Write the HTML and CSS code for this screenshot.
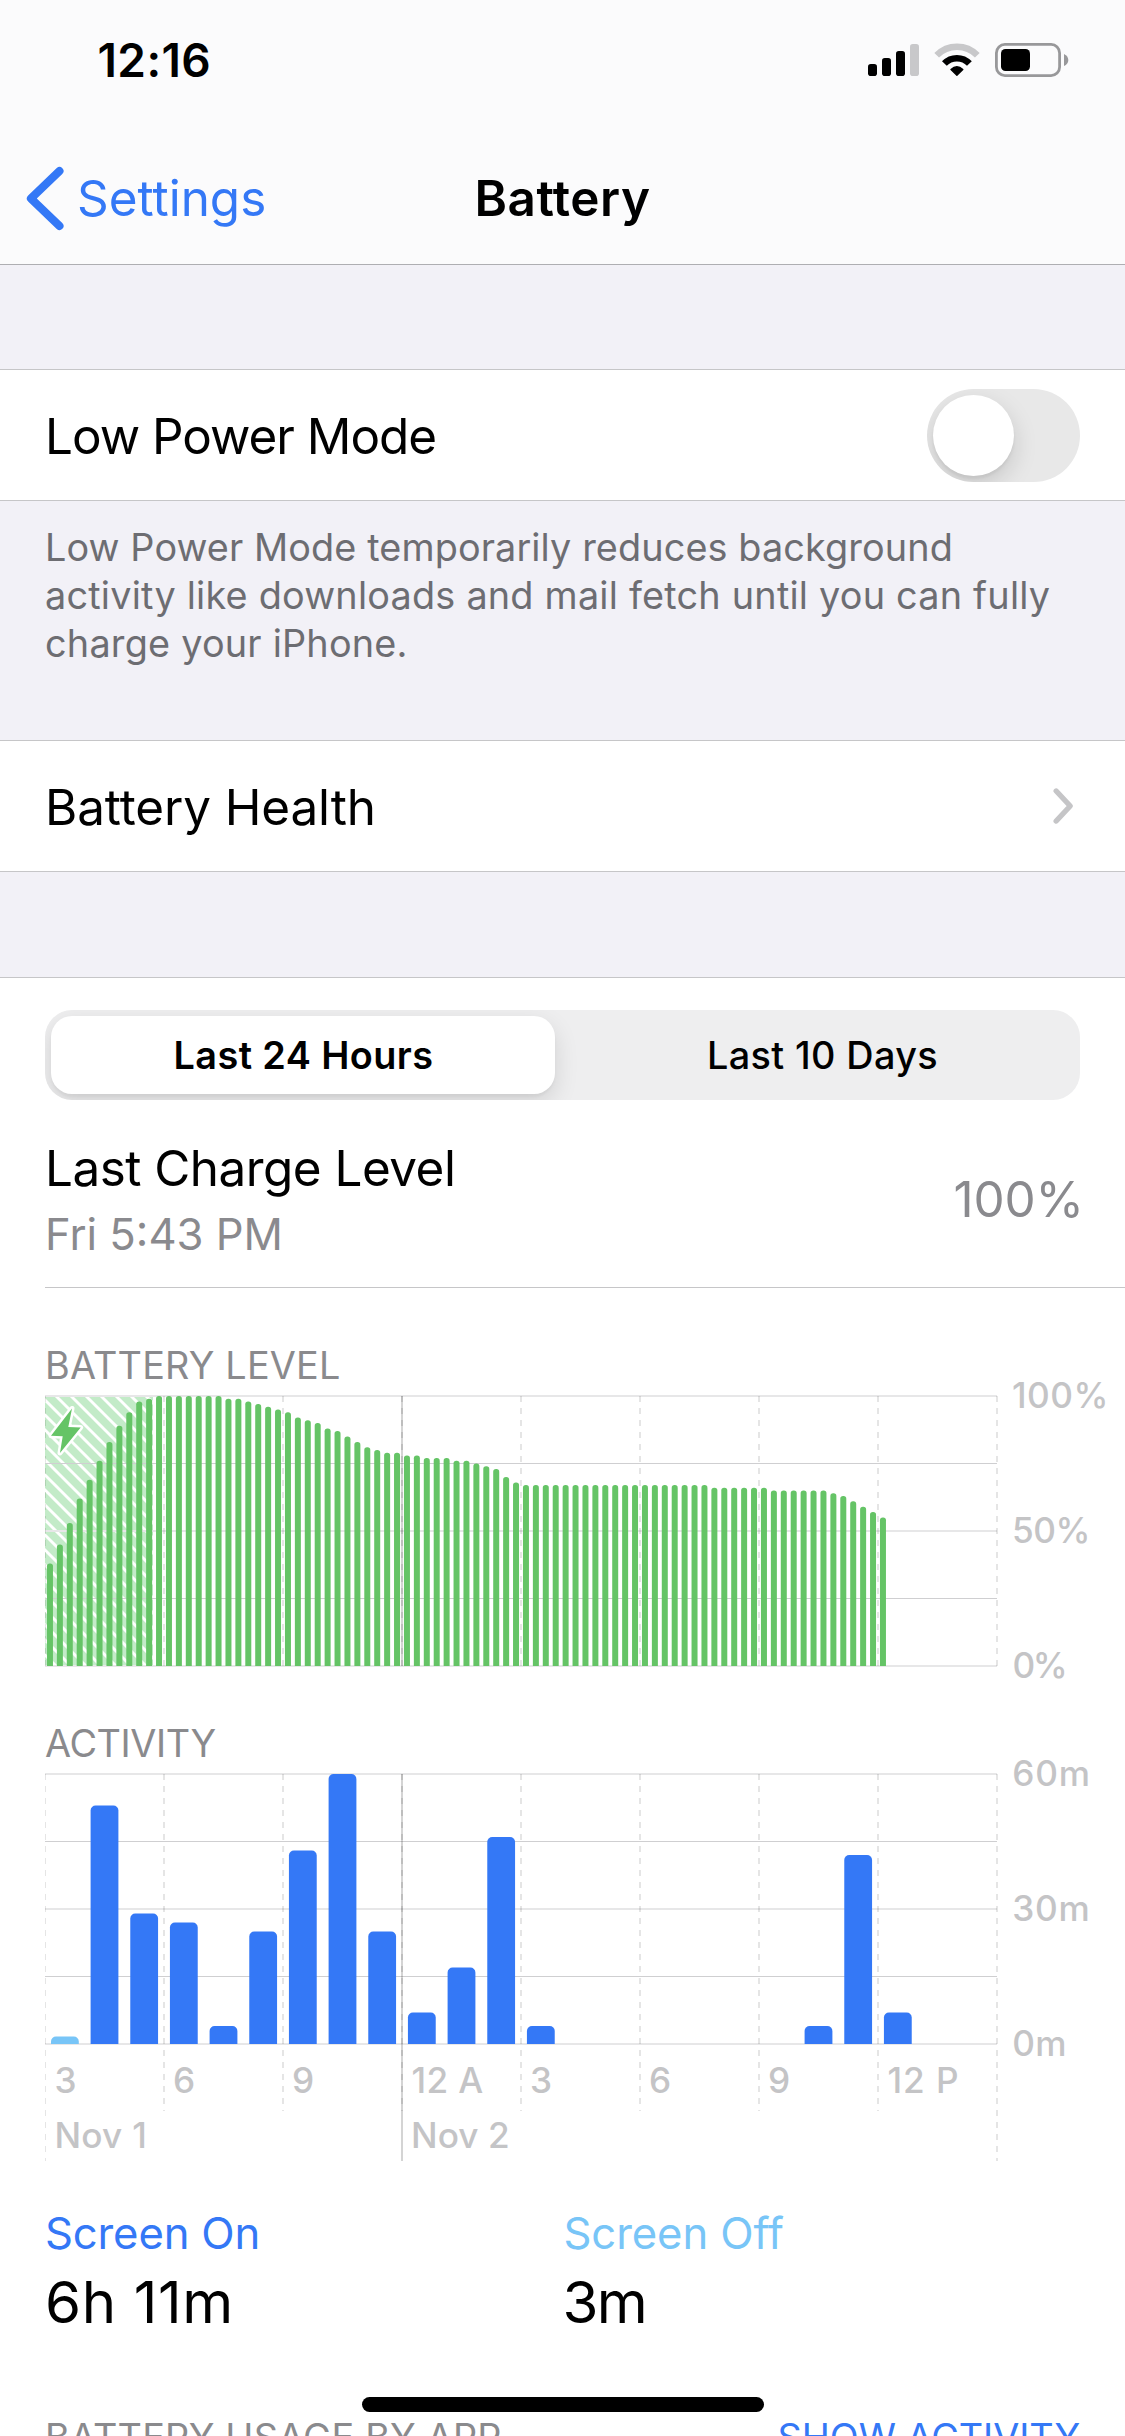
FILE: index.html
```html
<!DOCTYPE html>
<html lang="en">
<head>
<meta charset="utf-8">
<title>Battery</title>
<link rel="stylesheet" href="styles.css">
</head>
<body>
<header class="header">
  <div class="status">
    <span class="time">12:16</span>
    <svg class="status-icons" viewBox="868 40 202 40" width="202" height="40">
      <rect x="868" y="64" width="9" height="12" rx="2.8"/>
      <rect x="882" y="58" width="9" height="18" rx="2.8"/>
      <rect x="896" y="51" width="9" height="25" rx="2.8"/>
      <rect x="910" y="44" width="9" height="32" rx="2.8" fill="#c8c8ca"/>
      <path d="M936.7 55.2A28.5 28.5 0 0 1 977.3 55.2" fill="none" stroke="#c8c8ca" stroke-width="6.6"/>
      <path d="M944.4 63.6A17.2 17.2 0 0 1 969.4 63.6" fill="none" stroke="#000" stroke-width="6.6"/>
      <path d="M951 69.6Q956.9 64 962.8 69.6L956.9 75.2Z" stroke="#000" stroke-width="1.4" stroke-linejoin="round"/>
      <rect x="996.4" y="44.4" width="63.2" height="31.2" rx="8.5" fill="none" stroke="#98989a" stroke-width="2.8"/>
      <rect x="1001" y="49" width="29" height="22" rx="4.5"/>
      <path d="M1064 54Q1068.3 56 1068.3 60T1064 66Z" fill="#98989a"/>
    </svg>
  </div>
  <nav class="nav">
    <a class="back">
      <svg viewBox="0 0 40 66" width="40" height="66"><path d="M35.5 6L6.9 33.5L35.5 61" fill="none" stroke="#3478f6" stroke-width="8" stroke-linecap="round" stroke-linejoin="round"/></svg>
      <span class="back-label">Settings</span>
    </a>
    <h1 class="title">Battery</h1>
  </nav>
</header>

<section class="group first">
  <div class="row">
    <span class="label tight">Low Power Mode</span>
    <span class="toggle"><span class="knob"></span></span>
  </div>
</section>
<p class="footnote"><span class="first-line">Low Power Mode temporarily reduces background</span><br>activity like downloads and mail fetch until you can fully<br>charge your iPhone.</p>

<section class="group">
  <div class="row health">
    <span class="label">Battery Health</span>
    <svg class="chevron" viewBox="0 0 24 40" width="24" height="40"><path d="M5.2 5L19.2 20L5.2 35" fill="none" stroke="#c5c5c7" stroke-width="5.4" stroke-linecap="round" stroke-linejoin="round"/></svg>
  </div>
</section>

<main class="usage">
  <div class="segmented">
    <div class="segment selected">Last 24 Hours</div>
    <div class="segment">Last 10 Days</div>
  </div>
  <div class="charge">
    <div>
      <div class="charge-title">Last Charge Level</div>
      <div class="charge-time">Fri 5:43 PM</div>
    </div>
    <div class="charge-value">100%</div>
  </div>

  <h2 class="heading level-heading">BATTERY LEVEL</h2>
  <svg class="chart" id="level" viewBox="0 0 1125 330" width="1125" height="330">
    <defs>
      <pattern id="hatch" x="45" y="7" width="15" height="15" patternUnits="userSpaceOnUse">
        <rect width="15" height="15" fill="#c3ebc8"/>
        <path d="M-5 -1L17 21M-5 -16L17 6M-5 14L17 36" stroke="#fff" stroke-width="2.9"/>
      </pattern>
    </defs>
    <rect x="45" y="7" width="108" height="270" fill="url(#hatch)"/>
    <g class="grid"></g>
    <g class="bars"></g>
    <path d="M72 19.5L51 46.7L62.7 47.3L60 64L80.7 38.5L68.3 38Z" fill="#65c466" stroke="#fff" stroke-width="5" stroke-linejoin="round" paint-order="stroke"/>
    <g class="axis">
      <text x="1012" y="19.4" letter-spacing=".5">100%</text>
      <text x="1012" y="154.4" letter-spacing="-.5">50%</text>
      <text x="1012.4" y="289.4" letter-spacing="-2.4">0%</text>
    </g>
  </svg>

  <h2 class="heading activity-heading">ACTIVITY</h2>
  <svg class="chart" id="activity" viewBox="0 0 1125 436" width="1125" height="436">
    <g class="grid"></g>
    <g class="bars"></g>
    <g class="axis">
      <text x="1012.2" y="19.4" letter-spacing=".8">60m</text>
      <text x="1012.2" y="154.4" letter-spacing=".8">30m</text>
      <text x="1012.2" y="289.4" letter-spacing=".3">0m</text>
      <text x="54.4" y="326">3</text>
      <text x="173" y="326">6</text>
      <text x="292" y="326">9</text>
      <text x="411.4" y="326" letter-spacing=".4">12 A</text>
      <text x="530" y="326">3</text>
      <text x="649" y="326">6</text>
      <text x="768" y="326">9</text>
      <text x="887.6" y="326" letter-spacing=".9">12 P</text>
      <text x="54.4" y="381" letter-spacing=".25">Nov 1</text>
      <text x="411" y="381" letter-spacing=".05">Nov 2</text>
    </g>
  </svg>

  <div class="totals">
    <div>
      <div class="total-name on">Screen On</div>
      <div class="total-value">6h 11m</div>
    </div>
    <div>
      <div class="total-name off">Screen Off</div>
      <div class="total-value short">3m</div>
    </div>
  </div>

  <div class="apps">
    <h2 class="heading">BATTERY USAGE BY APP</h2>
    <a class="show">SHOW ACTIVITY</a>
  </div>
</main>
<div class="home"></div>
<script src="charts.js"></script>
</body>
</html>
```
FILE: styles.css
```css
* { box-sizing: border-box; }
html, body { margin: 0; padding: 0; }
body {
  position: relative;
  width: 1125px;
  height: 2436px;
  overflow: hidden;
  background: #f2f1f7;
  color: #000;
  font-family: Inter, "Liberation Sans", sans-serif;
  font-size: 49.4px;
}
h1, h2, p { margin: 0; font-weight: 400; }
svg { display: block; flex: none; }

.header {
  height: 265px;
  background: #fbfbfc;
  border-bottom: 1px solid #aeaeb2;
}
.status {
  display: flex;
  justify-content: space-between;
  align-items: center;
  height: 119px;
  padding: 0 55px 0 97.5px;
}
.time {
  font-size: 46px;
  font-weight: 600;
  letter-spacing: .39px;
}
.nav {
  display: grid;
  grid-template-columns: 1fr auto 1fr;
  align-items: center;
  height: 145px;
  padding-top: 13px;
}
.back {
  display: flex;
  align-items: center;
  padding-left: 24px;
  gap: 13px;
  color: #3478f6;
}
.back-label { letter-spacing: .02px; }
.title {
  font-size: 49.4px;
  font-weight: 600;
  letter-spacing: .5px;
}

.group {
  background: #fff;
  border-top: 1px solid #c6c6c8;
  border-bottom: 1px solid #c6c6c8;
}
.first { margin-top: 104px; }
.row {
  display: flex;
  align-items: center;
  justify-content: space-between;
  height: 130px;
  padding: 0 45px;
}
.health { padding-right: 50px; }
.label {
  padding-top: 2px;
  letter-spacing: -.1px;
}
.tight { letter-spacing: -1px; }
.toggle {
  width: 153px;
  height: 93px;
  padding: 6px;
  border-radius: 47px;
  background: #e8e8e8;
  overflow: hidden;
}
.knob {
  display: block;
  width: 81px;
  height: 81px;
  border-radius: 50%;
  background: #fff;
  box-shadow: 0 9px 24px rgba(0, 0, 0, .15), 0 3px 3px rgba(0, 0, 0, .05);
}
.footnote {
  height: 239px;
  padding: 22px 45px 0;
  color: #6d6d72;
  font-size: 37.8px;
  line-height: 48px;
  letter-spacing: .22px;
  white-space: nowrap;
}
.first-line { letter-spacing: .11px; }

.usage {
  margin-top: 105px;
  height: 1459px;
  padding-top: 32px;
  background: #fff;
  border-top: 1px solid #c6c6c8;
}
.segmented {
  display: grid;
  grid-template-columns: 504px 1fr;
  height: 90px;
  margin: 0 45px;
  padding: 6px;
  border-radius: 27px;
  background: #eeeeef;
  overflow: hidden;
}
.segment {
  display: flex;
  align-items: center;
  justify-content: center;
  border-radius: 21px;
  font-size: 37.8px;
  font-weight: 500;
  letter-spacing: .39px;
  padding-left: 16px;
}
.selected {
  padding-left: 1px;
  background: #fff;
  font-weight: 600;
  letter-spacing: .42px;
  box-shadow: 0 9px 24px rgba(0, 0, 0, .12), 0 3px 3px rgba(0, 0, 0, .04);
}
.charge {
  display: flex;
  align-items: center;
  justify-content: space-between;
  height: 188px;
  margin-left: 45px;
  padding: 35px 43px 20px 0;
  border-bottom: 1px solid #c6c6c8;
}
.charge-title {
  line-height: 66px;
  letter-spacing: -.5px;
}
.charge-time {
  color: #8a8a8e;
  font-size: 43.6px;
  line-height: 68px;
  margin-bottom: -2px;
}
.charge-value {
  padding-bottom: 5px;
  color: #8a8a8e;
  margin-right: -2px;
  letter-spacing: -.1px;
}

.heading {
  color: #8a8a8d;
  font-size: 37.8px;
  line-height: 48px;
  letter-spacing: .19px;
}
.level-heading { margin: 53px 0 0 45px; }
.activity-heading {
  margin-left: 45px;
  letter-spacing: -.4px;
}
.chart { overflow: visible; }
.axis {
  fill: #c4c4c6;
  font-size: 35.2px;
  font-weight: 500;
}
.thick { fill: #e7e7e8; }
.thin { fill: #cfcfd1; }
.tick { fill: none; stroke: rgba(0, 0, 0, .1); stroke-width: 2; stroke-dasharray: 6 6; }
.midnight { fill: rgba(0, 0, 0, .17); }
.level-bar { fill: #65c466; }
.screen-on { fill: #3478f6; }
.screen-off { fill: #78c5f7; }

.totals {
  display: grid;
  grid-template-columns: 518.5px 1fr;
  padding-left: 45px;
}
.total-name {
  padding-top: 1px;
  font-size: 43.6px;
  height: 60px;
  line-height: 60px;
}
.on { color: #3478f6; letter-spacing: -.15px; }
.off { color: #78c5f7; letter-spacing: -.1px; font-feature-settings: "calt" 0; }
.total-value {
  font-size: 58.2px;
  line-height: 78px;
  letter-spacing: .6px;
}
.short { letter-spacing: -1.7px; margin-left: -1px; }
.apps {
  display: flex;
  justify-content: space-between;
  margin-top: 72px;
  padding: 0 45px;
}
.show {
  color: #3478f6;
  font-size: 37.8px;
  line-height: 48px;
  letter-spacing: -.05px;
}
.home {
  position: absolute;
  left: 362px;
  top: 2397px;
  width: 402px;
  height: 15px;
  border-radius: 8px;
  background: #000;
}
```
FILE: charts.js
```
// Battery level in percent, one value per quarter hour.
const level = [38, 45, 53, 62, 69, 76, 83, 89, 94, 98, 99, 100, 100, 100, 100, 100, 100, 100,
  99, 99, 98, 97, 96, 95, 94, 92, 91, 90, 88, 87, 85, 83, 81, 80, 79, 79, 78, 78, 77, 77, 77,
  76, 76, 75, 74, 73, 70, 68].concat(Array(19).fill(67), Array(6).fill(66), Array(6).fill(65),
  [64, 63, 61, 59, 57, 55]);
// Minutes of screen time, one value per hour.
const minutes = [0, 53, 29, 27, 4, 25, 43, 60, 25, 7, 17, 46, 4, 0, 0, 0, 0, 0, 0, 4, 42, 7];

const LEFT = 45, WIDTH = 952, TOP = 7, HEIGHT = 270, BOTTOM = TOP + HEIGHT;

function bar(x, w, h, r, cls) {
  const y = BOTTOM - h;
  return `<path class="${cls}" d="M${x} ${BOTTOM}V${y + r}a${r} ${r} 0 0 1 ${r} ${-r}h${w - 2 * r}a${r} ${r} 0 0 1 ${r} ${r}V${BOTTOM}z"/>`;
}

function grid(shortEnd, longEnd) {
  let out = '';
  for (let i = 0; i <= 4; i++) {
    const y = TOP + i * HEIGHT / 4;
    out += i % 2
      ? `<rect class="thin" x="${LEFT}" y="${Math.floor(y)}" width="${WIDTH}" height="1"/>`
      : `<rect class="thick" x="${LEFT}" y="${y - 1}" width="${WIDTH}" height="2"/>`;
  }
  for (let i = 0; i <= 8; i++) {
    const x = i === 0 ? LEFT + 0.5 : LEFT + i * WIDTH / 8;
    const end = i === 0 || i === 8 ? longEnd : shortEnd;
    const width = i === 0 ? ' style="stroke-width:1"' : '';
    out += `<path class="tick"${width} d="M${x} ${TOP}V${end}"/>`;
  }
  return out + `<rect class="midnight" x="401" y="${TOP}" width="2" height="${longEnd - TOP}"/>`;
}

document.querySelector('#level .grid').innerHTML = grid(BOTTOM, BOTTOM);
document.querySelector('#activity .grid').innerHTML = grid(344, 394);

const quarter = WIDTH / 96, hour = WIDTH / 24;
document.querySelector('#level .bars').innerHTML = level
  .map((v, i) => bar(LEFT + (i + 0.5) * quarter - 3, 6, v * HEIGHT / 100, 2.8, 'level-bar')).join('');
document.querySelector('#activity .bars').innerHTML = bar(51, 27.8, 7.5, 5, 'screen-off') + minutes
  .map((v, i) => v ? bar(LEFT + (i + 0.5) * hour - 13.9, 27.8, v * HEIGHT / 60, 5, 'screen-on') : '').join('');
```
